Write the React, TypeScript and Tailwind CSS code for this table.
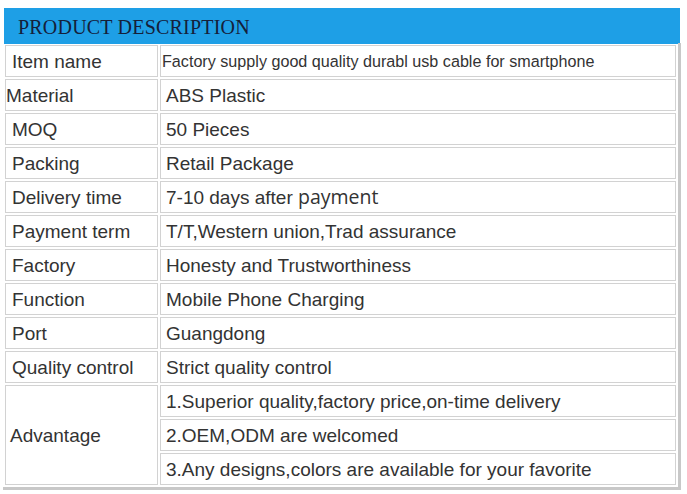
import React from "react";

const rows: [string, string][] = [
  ["Packing", "Retail Package"],
  ["Delivery time", ""],
  ["Payment term", "T/T,Western union,Trad assurance"],
  ["Factory", "Honesty and Trustworthiness"],
  ["Function", "Mobile Phone Charging"],
  ["Port", "Guangdong"],
  ["Quality control", "Strict quality control"],
];

const advantages = [
  "1.Superior quality,factory price,on-time delivery",
  "2.OEM,ODM are welcomed",
  "3.Any designs,colors are available for your favorite",
];

const cell = "h-[32px] border border-[#d2d2d2] p-0 align-middle";

export default function App() {
  return (
    <div className="min-h-screen bg-white pt-[8px] pl-[4px] font-['Liberation_Sans',Arial,sans-serif] text-[#333]">
      <div className="w-[676px]">
        <div className="h-[36px] bg-[#1e9fe6] pl-[14px] flex items-center">
          <span className="font-['Liberation_Serif',serif] text-[20px] text-[#15203a] leading-none pt-[2px] tracking-[0.2px]">
            PRODUCT DESCRIPTION
          </span>
        </div>

        <table className="-ml-[1px] -mt-[1px] w-[678px] border-separate border-spacing-[2px] border-r-[3px] border-b-[3px] border-r-[#c8c8c8] border-b-[#c8c8c8] text-[19px] leading-none">
          <tbody>
            <tr>
              <td className={`${cell} w-[153px] pl-[6px]`}>Item name</td>
              <td className={`${cell} pl-[1px] text-[16.15px]`}>
                Factory supply good quality durabl usb cable for smartphone
              </td>
            </tr>
            <tr>
              <td className={cell}>Material</td>
              <td className={`${cell} pl-[5px]`}>ABS Plastic</td>
            </tr>
            <tr>
              <td className={`${cell} pl-[6px]`}>MOQ</td>
              <td className={`${cell} pl-[5px]`}>50 Pieces</td>
            </tr>
            {rows.map(([k, v]) => (
              <tr key={k}>
                <td className={`${cell} pl-[6px]`}>{k}</td>
                <td className={`${cell} pl-[5px]`}>
                  {k === "Delivery time" ? (
                    <>
                      7-10 days after{" "}
                      <span className="font-['Open_Sans',sans-serif] text-[19.5px]">payment</span>
                    </>
                  ) : (
                    v
                  )}
                </td>
              </tr>
            ))}
            {advantages.map((a, i) => (
              <tr key={a}>
                {i === 0 && (
                  <td rowSpan={3} className="border border-[#d2d2d2] pl-[4px] align-middle">
                    Advantage
                  </td>
                )}
                <td className={`${cell} pl-[5px]`}>{a}</td>
              </tr>
            ))}
          </tbody>
        </table>
      </div>
    </div>
  );
}
